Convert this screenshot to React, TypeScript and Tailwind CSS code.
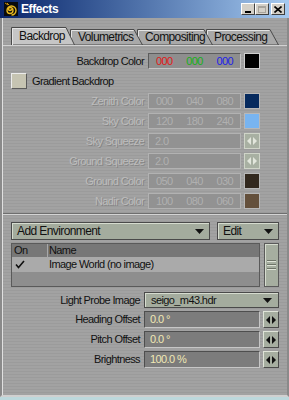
import React from 'react';

const FONT = "font-['Liberation_Sans',Arial,sans-serif]";
const TXT = 'text-[11px] tracking-[-0.6px]';

const TABS = [
    { label: 'Backdrop', w: 64, ml: 0, z: 'z-40', active: true },
    { label: 'Volumetrics', w: 73, ml: -5, z: 'z-30', active: false },
    { label: 'Compositing', w: 76, ml: -6, z: 'z-20', active: false },
    { label: 'Processing', w: 73, ml: -7, z: 'z-10', active: false },
];

const GRADIENT_ROWS = [
    { label: 'Zenith Color', kind: 'rgb', values: ['000', '040', '080'], swatch: 'bg-[#062a5e]' },
    { label: 'Sky Color', kind: 'rgb', values: ['120', '180', '240'], swatch: 'bg-[#78b4f0]' },
    { label: 'Sky Squeeze', kind: 'num', values: ['2.0'] },
    { label: 'Ground Squeeze', kind: 'num', values: ['2.0'] },
    { label: 'Ground Color', kind: 'rgb', values: ['050', '040', '030'], swatch: 'bg-[#32281e]' },
    { label: 'Nadir Color', kind: 'rgb', values: ['100', '080', '060'], swatch: 'bg-[#64503c]' },
];

const PROBE_ROWS = [
    { label: 'Heading Offset', value: '0.0 °' },
    { label: 'Pitch Offset', value: '0.0 °' },
    { label: 'Brightness', value: '100.0 %' },
];

const ArrowPair: React.FC<{ color: string }> = ({ color }) => (
    <svg width="10" height="8" viewBox="0 0 10 8">
        <polygon points="4,0 4,8 0,4" fill={color} />
        <polygon points="6,0 6,8 10,4" fill={color} />
    </svg>
);

const DownArrow = () => (
    <svg width="9" height="5" viewBox="0 0 9 5">
        <polygon points="0,0 9,0 4.5,5" fill="#111" />
    </svg>
);

const Tab: React.FC<{ label: string; w: number; ml: number; z: string; active: boolean }> = ({ label, w, ml, z, active }) => {
    const h = active ? 18 : 16;
    return (
        <div className={`relative ${z} shrink-0`} style={{ width: w, height: h, marginLeft: ml }}>
            <svg className="absolute inset-0" width={w} height={h}>
                <polygon
                    points={`0.5,${h} 0.5,0.5 ${w - 9},0.5 ${w - 0.5},${h}`}
                    fill={active ? '#c6c6c6' : '#a9a9a9'}
                    stroke="#4a4a4a"
                />
                <polyline points={`1.5,${h} 1.5,1.5 ${w - 9.5},1.5`} fill="none" stroke="#e4e4e4" />
            </svg>
            <span className={`relative block pl-[8px] ${TXT} text-[12px] leading-[16px] text-[#111]`} style={{ paddingTop: active ? 1 : 0 }}>
                {label}
            </span>
        </div>
    );
};

const TitleButton: React.FC<{ children: React.ReactNode; className?: string }> = ({ children, className }) => (
    <div className={`w-[14px] h-[12px] bg-[#d4d0c8] border border-t-white border-l-white border-r-[#404040] border-b-[#404040] flex items-center justify-center ${className ?? ''}`}>
        {children}
    </div>
);

export default function App() {
    return (
        <div className={`w-[289px] h-[400px] overflow-hidden bg-[#bcd8dc] ${FONT}`}>
            {/* Barra de título */}
            <div className="h-[18px] flex items-center bg-linear-to-r from-[#0a246a] to-[#a6caf0] pl-[4px] pr-[4px]">
                <svg width="14" height="14" viewBox="0 0 14 14">
                    <rect width="14" height="14" fill="#0b0b0b" />
                    <path d="M7 7 m0.5 0 a1.5 1.5 0 1 1 -1.5 -1.5 a3 3 0 1 1 -3 3 a4.5 4.5 0 1 1 4.5 4.5" fill="none" stroke="#e8b820" strokeWidth="1.4" />
                    <path d="M1 1 L4 3 M3 1 L5 3" stroke="#c89010" strokeWidth="1" />
                </svg>
                <span className="ml-[3px] text-[12px] tracking-[-0.4px] font-bold text-white leading-none">Effects</span>
                <div className="ml-auto flex items-center">
                    <TitleButton>
                        <div className="w-[6px] h-[2px] bg-black mt-[5px]" />
                    </TitleButton>
                    <TitleButton>
                        <div className="w-[8px] h-[7px] border border-t-2 border-[#a8a49c]" />
                    </TitleButton>
                    <TitleButton className="ml-[2px]">
                        <svg width="8" height="7" viewBox="0 0 8 7">
                            <path d="M0.5 0.5 L7.5 6.5 M7.5 0.5 L0.5 6.5" stroke="#000" strokeWidth="1.6" />
                        </svg>
                    </TitleButton>
                </div>
            </div>

            {/* Cuerpo de la ventana */}
            <div className={`h-[379px] flex flex-col ${TXT} border-l-2 border-l-[#8a8a8a] border-r-2 border-r-[#8a8a8a] border-b-2 border-b-[#d0d0d0] bg-[repeating-linear-gradient(180deg,#a2a2a2_0px,#a2a2a2_2px,#9b9b9b_2px,#9b9b9b_3px)]`}>
                <div className="flex-1 flex flex-col border-l border-l-[#e0e0e0]">
                    {/* Pestañas */}
                    <div className="mt-[9px] h-[19px] flex items-end pl-[8px] border-b border-b-[#d2d2d2]">
                        {TABS.map((t) => (
                            <Tab key={t.label} {...t} />
                        ))}
                    </div>

                    {/* Backdrop */}
                    <div className="mt-[7px] flex flex-col gap-[4px]">
                        <div className="h-[16px] flex items-center">
                            <div className="w-[141px] text-right text-[#111]">Backdrop Color</div>
                            <div className="ml-[4px] w-[93px] h-[16px] flex bg-[#8e8e8e] border border-t-[#5c5c5c] border-l-[#5c5c5c] border-r-[#c4c4c4] border-b-[#c4c4c4] leading-[14px]">
                                <span className="flex-1 text-center text-[#e01818]">000</span>
                                <span className="flex-1 text-center text-[#18b018]">000</span>
                                <span className="flex-1 text-center text-[#2020e8]">000</span>
                            </div>
                            <div className="ml-[3px] w-[16px] h-[16px] bg-black border border-[#cfcfcf]" />
                        </div>

                        <div className="h-[16px] flex items-center pl-[8px]">
                            <div className="w-[16px] h-[16px] bg-[#c6c4b2] border border-t-[#ececec] border-l-[#ececec] border-r-[#5a5a5a] border-b-[#5a5a5a]" />
                            <span className="ml-[5px] text-[#111]">Gradient Backdrop</span>
                        </div>

                        {GRADIENT_ROWS.map((r) => (
                            <div key={r.label} className="h-[16px] flex items-center">
                                <div className="w-[141px] text-right text-[#bdbdbd] [text-shadow:1px_1px_0_#858585]">{r.label}</div>
                                <div className="ml-[4px] w-[93px] h-[16px] flex bg-[#929292] border border-[#b2b2b2] leading-[14px] text-[#b0b0b0]">
                                    {r.kind === 'rgb' ? (
                                        r.values.map((v, i) => (
                                            <span key={i} className="flex-1 text-center">{v}</span>
                                        ))
                                    ) : (
                                        <span className="pl-[6px]">{r.values[0]}</span>
                                    )}
                                </div>
                                {r.kind === 'rgb' ? (
                                    <div className={`ml-[3px] w-[16px] h-[16px] ${r.swatch} border border-[#b8b8b8]`} />
                                ) : (
                                    <div className="ml-[3px] w-[16px] h-[16px] bg-[#a8b0a2] border border-[#cfd4c8] flex items-center justify-center">
                                        <ArrowPair color="#e2e6dc" />
                                    </div>
                                )}
                            </div>
                        ))}
                    </div>

                    {/* Separador */}
                    <div className="mt-[4px] h-[2px] border-t border-t-[#6e6e6e] border-b border-b-[#d4d4d4]" />

                    {/* Entorno */}
                    <div className="mt-[7px] pl-[8px] flex gap-[7px] text-[12px]">
                        <div className="w-[199px] h-[18px] flex items-center justify-between px-[5px] bg-[#a4ac9e] border border-[#4a4a4a] shadow-[inset_1px_1px_0_#d6dccf] text-[#111]">
                            <span>Add Environment</span>
                            <DownArrow />
                        </div>
                        <div className="w-[62px] h-[18px] flex items-center justify-between px-[5px] bg-[#a4ac9e] border border-[#4a4a4a] shadow-[inset_1px_1px_0_#d6dccf] text-[#111]">
                            <span>Edit</span>
                            <DownArrow />
                        </div>
                    </div>

                    <div className="mt-[3px] pl-[8px] flex gap-[4px]">
                        <div className="w-[249px] h-[44px] flex flex-col border border-[#5a5a5a] text-[#111]">
                            <div className="h-[13px] flex bg-[#777777] leading-[13px]">
                                <span className="w-[36px] pl-[2px] border-r border-r-[#a8a8a8]">On</span>
                                <span className="pl-[1px]">Name</span>
                            </div>
                            <div className="h-[15px] flex items-center bg-[#aaaaaa]">
                                <span className="w-[36px] pl-[3px]">
                                    <svg width="10" height="9" viewBox="0 0 10 9">
                                        <path d="M1 4.5 L3.5 7.5 L9 1" fill="none" stroke="#111" strokeWidth="1.6" />
                                    </svg>
                                </span>
                                <span className="pl-[1px]">Image World (no image)</span>
                            </div>
                            <div className="flex-1 bg-[#8e8e8e]" />
                        </div>
                        <div className="w-[15px] h-[44px] flex items-center justify-center bg-[#a6aea0] border border-[#5a5a5a] shadow-[inset_1px_1px_0_#d6dccf]">
                            <div className="flex flex-col gap-[2px]">
                                <div className="w-[9px] h-[2px] border-t border-t-[#6e7468] border-b border-b-[#dfe4d8]" />
                                <div className="w-[9px] h-[2px] border-t border-t-[#6e7468] border-b border-b-[#dfe4d8]" />
                                <div className="w-[9px] h-[2px] border-t border-t-[#6e7468] border-b border-b-[#dfe4d8]" />
                            </div>
                        </div>
                    </div>

                    {/* Light probe */}
                    <div className="mt-[5px] flex flex-col gap-[3px]">
                        <div className="h-[16px] flex items-center">
                            <div className="w-[137px] text-right text-[#111]">Light Probe Image</div>
                            <div className="ml-[4px] w-[135px] h-[16px] flex items-center justify-between px-[6px] bg-[#a4ac9e] border border-[#4a4a4a] shadow-[inset_1px_1px_0_#d6dccf] text-[#111]">
                                <span>seigo_m43.hdr</span>
                                <DownArrow />
                            </div>
                        </div>
                        {PROBE_ROWS.map((r) => (
                            <div key={r.label} className="h-[17px] flex items-center">
                                <div className="w-[137px] text-right text-[#111]">{r.label}</div>
                                <div className="ml-[4px] w-[116px] h-[17px] flex items-center pl-[5px] bg-[#7c7c7c] border border-t-[#4e4e4e] border-l-[#4e4e4e] border-r-[#c6c6c6] border-b-[#c6c6c6] text-[#f0e8b4]">
                                    {r.value}
                                </div>
                                <div className="ml-[3px] w-[16px] h-[17px] flex items-center justify-center bg-[#a6aea0] border border-t-[#dfe4d8] border-l-[#dfe4d8] border-r-[#4a4a4a] border-b-[#4a4a4a]">
                                    <ArrowPair color="#111" />
                                </div>
                            </div>
                        ))}
                    </div>
                </div>
            </div>
        </div>
    );
}
